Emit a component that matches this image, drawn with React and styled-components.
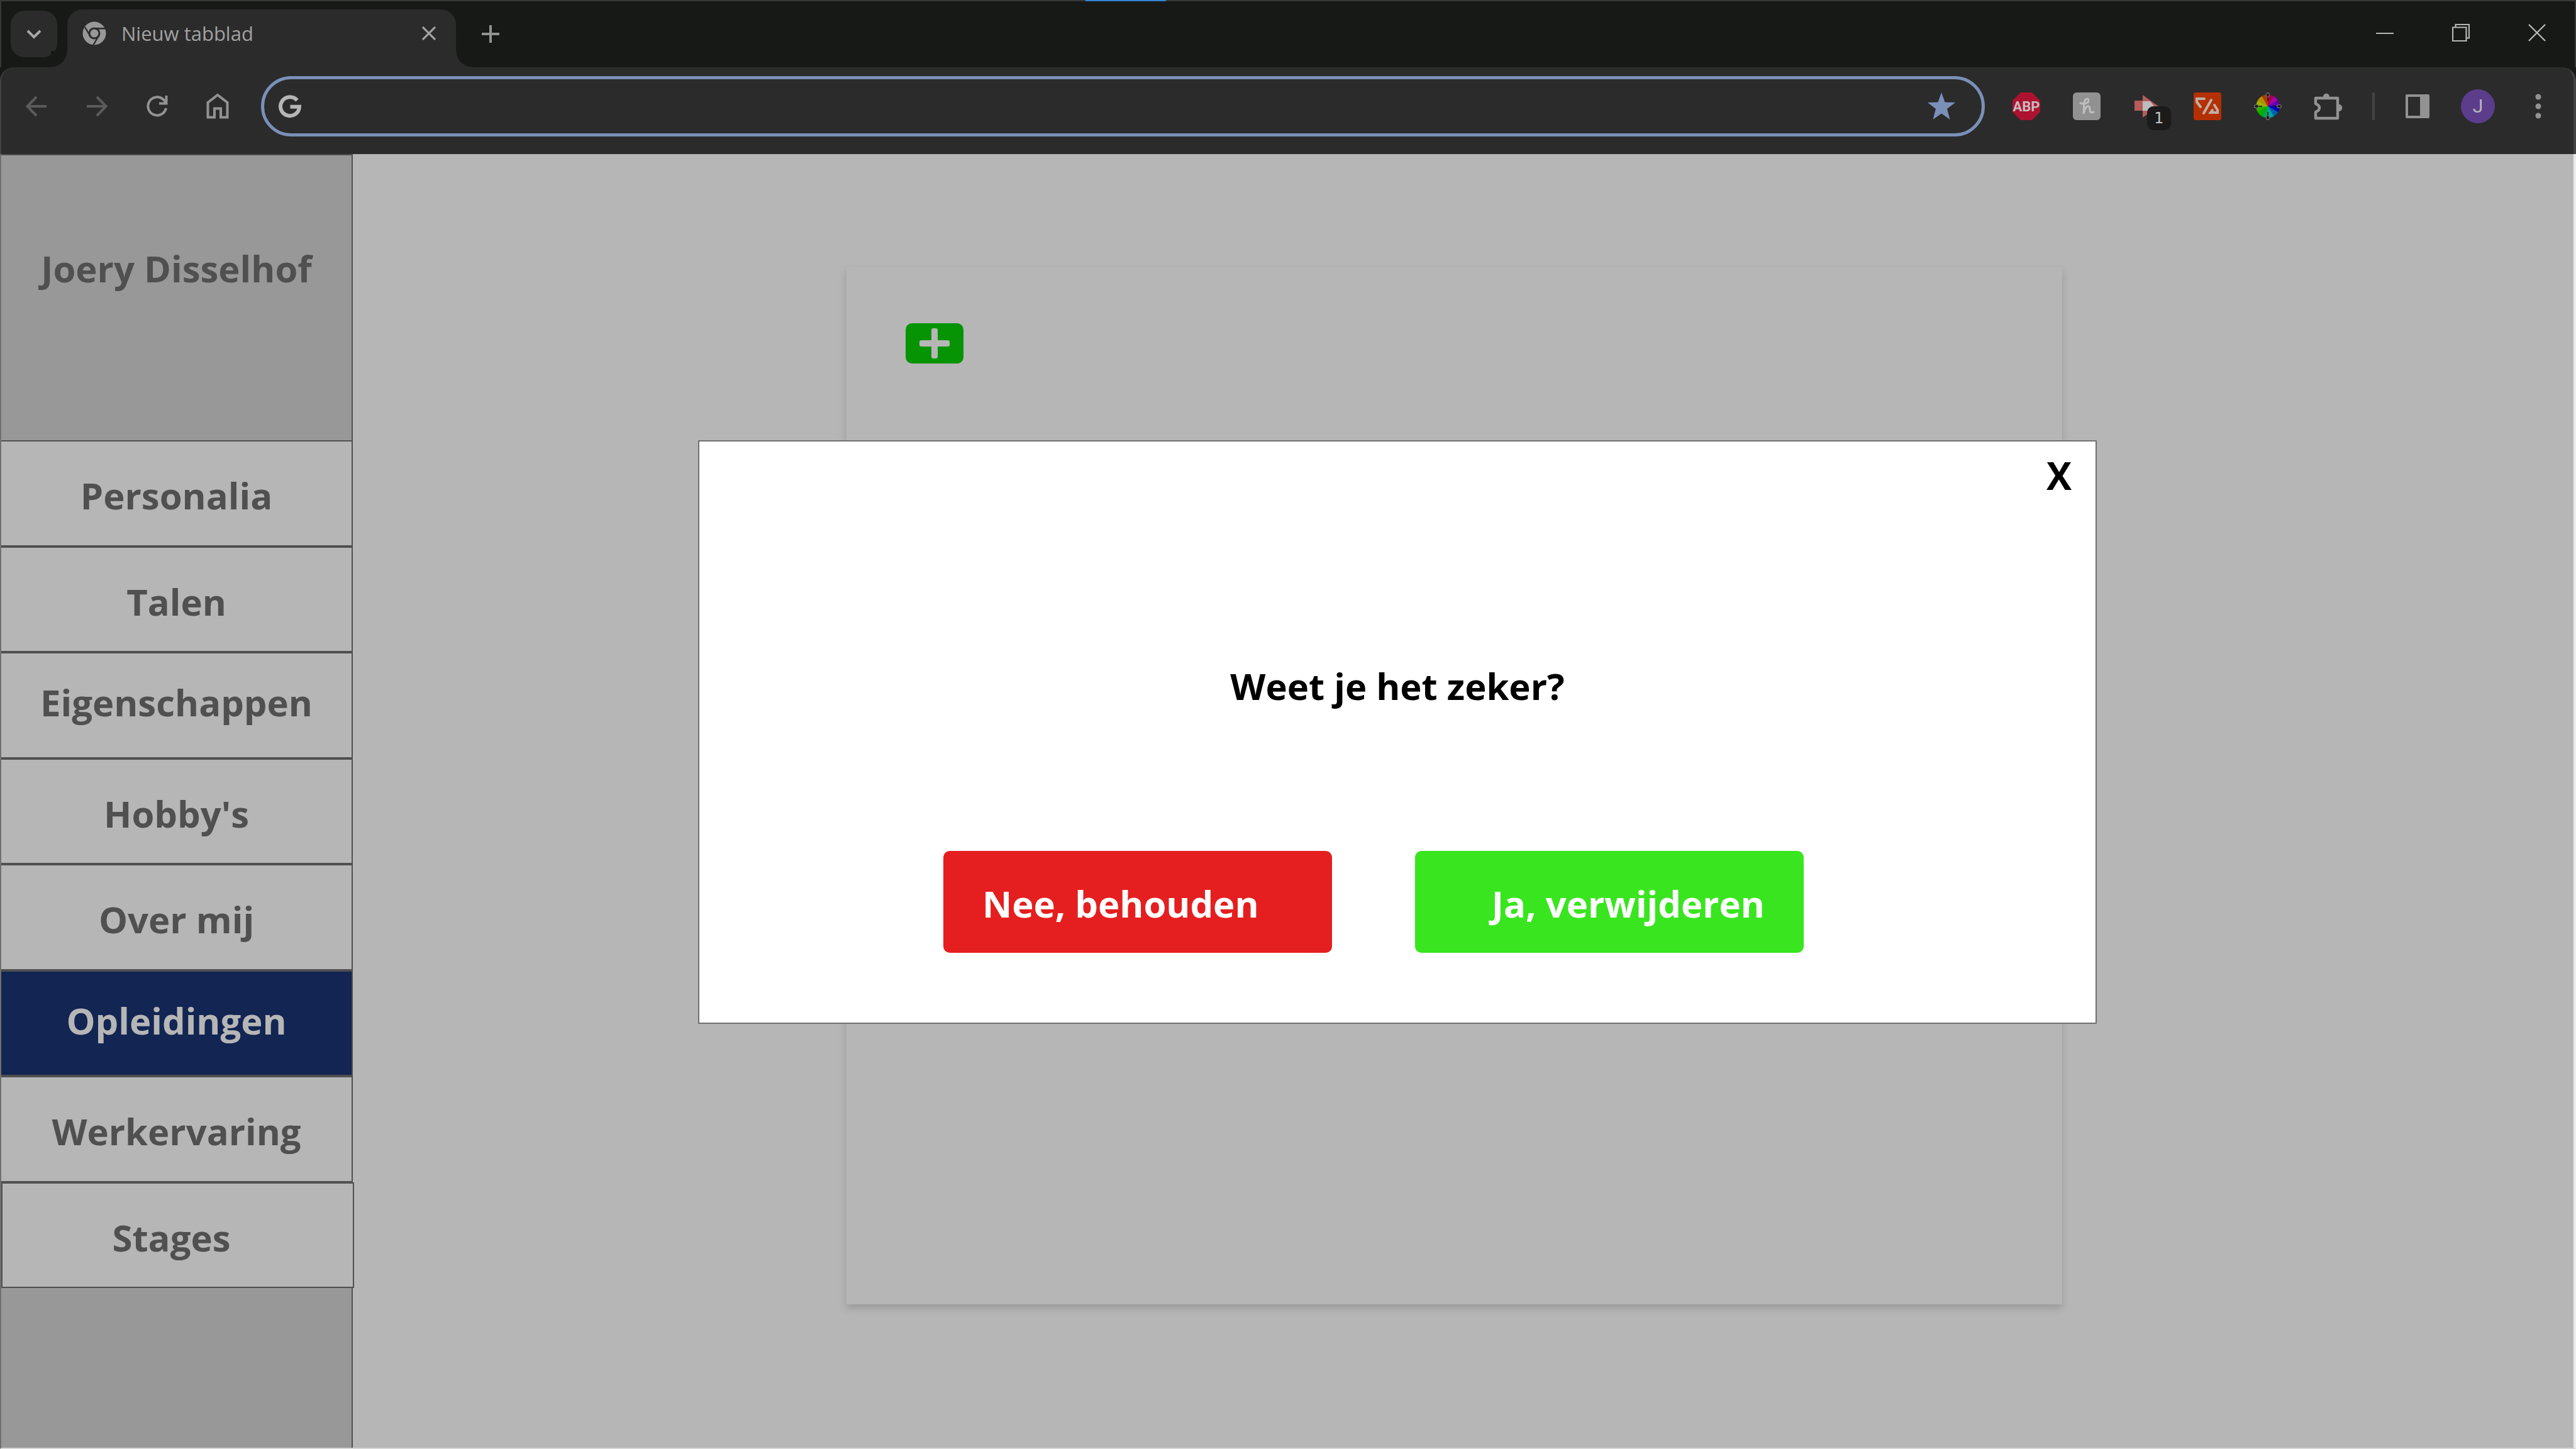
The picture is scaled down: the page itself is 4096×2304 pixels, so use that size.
import React from "react";
import styled, { createGlobalStyle } from "styled-components";

const Global = createGlobalStyle`
  * { box-sizing: border-box; }
  html, body, #root { height: 100%; }
  body {
    margin: 0;
    background: #b6b6b6;
    font-family: "Open Sans", "Noto Sans", sans-serif;
  }
  button, input { font: inherit; }
`;

const Window = styled.div`
  position: relative;
  min-height: 100%;
  display: flex;
  flex-direction: column;
  border-top: 2px solid #363936;
  background: #171917;
`;

const ActiveMarker = styled.span`
  position: absolute;
  top: -2px;
  left: 42.14%;
  width: 128px;
  height: 2px;
  background: #3484d4;
`;

const BareButton = styled.button`
  display: flex;
  align-items: center;
  justify-content: center;
  flex: none;
  padding: 0;
  border: 0;
  background: none;
  color: ${(p) => p.$color || "#929292"};
`;

const TabStrip = styled.header`
  display: flex;
  align-items: flex-end;
  height: 105px;
  padding-left: 15px;
  border: 2px solid #363936;
  border-width: 0 2px;
`;

const TabSearch = styled(BareButton)`
  width: 74px;
  height: 74px;
  margin: 0 16px 16px 0;
  border-radius: 22px;
  background: #2b2b2b;
  color: #a8a8a8;
`;

const Tab = styled.div`
  position: relative;
  display: flex;
  align-items: center;
  gap: 24px;
  width: 618px;
  height: 92px;
  padding: 0 32px 16px 24px;
  border-radius: 24px 24px 0 0;
  background: #2b2b2b;
  color: #a2a2a2;
  font-size: 31px;
  line-height: 44px;

  &::before,
  &::after {
    content: "";
    position: absolute;
    bottom: 0;
    width: 26px;
    height: 26px;
  }
  &::before {
    right: 100%;
    background: radial-gradient(circle at 0 0, #171917 25px, #2b2b2b 26px);
  }
  &::after {
    left: 100%;
    background: radial-gradient(circle at 100% 0, #171917 25px, #2b2b2b 26px);
  }
`;

const TabTitle = styled.span`
  flex: 1;
`;

const NewTab = styled(BareButton)`
  width: 74px;
  height: 74px;
  margin: 0 auto 16px 18px;
`;

const WindowControls = styled.div`
  display: flex;
  align-self: flex-start;
`;

const WindowButton = styled(BareButton)`
  width: 121px;
  height: 100px;
  color: #b6b6b6;
`;

const Toolbar = styled.div`
  display: flex;
  align-items: center;
  height: 138px;
  padding: 0 8px 14px;
  border: 0 solid #424242;
  border-width: 0 4px 0 2px;
  border-radius: 22px 22px 0 0;
  background: #2b2b2b;
`;

const NavButton = styled(BareButton)`
  width: 96px;
  height: 96px;
`;

const AddressBar = styled.label`
  display: flex;
  align-items: center;
  flex: 1;
  height: 96px;
  margin: 0 18px 0 21px;
  padding: 0 42px 0 22px;
  border: 5px solid #7a90b8;
  border-radius: 48px;
`;

const AddressInput = styled.input`
  flex: 1;
  min-width: 0;
  height: 80px;
  border: 0;
  outline: 0;
  background: none;
  color: #b6b6b6;
  font-size: 31px;
`;

const Divider = styled.span`
  width: 4px;
  height: 44px;
  margin: 0 20px 0 22px;
  background: #444;
`;

const ExtensionTile = styled.span`
  position: relative;
  display: flex;
  width: 44px;
  height: 44px;
`;

const Badge = styled.span`
  position: absolute;
  top: 22px;
  left: 22px;
  width: 38px;
  height: 38px;
  border-radius: 10px;
  background: #1b1b1b;
  color: #c4c4c4;
  font: 24px/38px "DejaVu Sans", sans-serif;
  text-align: center;
`;

const Avatar = styled.span`
  width: 54px;
  height: 54px;
  border-radius: 50%;
  background: #5c3d8c;
  color: #b6b6b6;
  font: 30px/54px Roboto, sans-serif;
  text-align: center;
`;

const Page = styled.div`
  display: flex;
  flex: 1;
  border: 2px solid;
  border-width: 0 4px 2px 2px;
  border-color: #d6d6d6 #ebebeb #d6d6d6 #707070;
  background: #b6b6b6;
`;

const Sidebar = styled.aside`
  display: flex;
  flex-direction: column;
  flex: none;
  width: 559px;
  border: 2px solid #505050;
  border-width: 2px 2px 0 0;
  background: #989898;
`;

const Owner = styled.h1`
  height: 453px;
  margin: 0;
  padding-top: 138px;
  color: #505050;
  font-size: 58px;
  line-height: 84px;
  font-weight: 700;
  text-align: center;
`;

const Menu = styled.nav`
  display: grid;
  grid-auto-rows: 1fr;
  height: 1348px;
`;

const MenuLink = styled.a`
  display: flex;
  align-items: center;
  justify-content: center;
  padding: ${(p) => (p.$raised ? "0 0 8px" : "8px 0 0")};
  border: 2px solid #505050;
  border-width: 2px 0;
  background: ${(p) => (p.$active ? "#122553" : "#b6b6b6")};
  color: ${(p) => (p.$active ? "#b6b6b6" : "#505050")};
  font-size: 58px;
  line-height: 84px;
  font-weight: 700;
  text-decoration: none;

  &:last-child {
    margin-right: -4px;
    padding-right: 20px;
    border-width: 2px;
  }
`;

const Content = styled.main`
  flex: 1;
  padding: 180px 813px 228px 785px;
`;

const Card = styled.section`
  height: 100%;
  padding: 89px 94px;
  background: #b6b6b6;
  box-shadow: 0 6px 12px rgba(0, 0, 0, 0.16);
`;

const AddButton = styled(BareButton)`
  width: 92px;
  height: 64px;
  border-radius: 10px;
  background: #079404;
  color: #b6b6b6;
`;

const Overlay = styled.div`
  position: absolute;
  inset: 0;
  padding: 698px 762px 0 1110px;
`;

const Dialog = styled.section`
  display: flex;
  flex-direction: column;
  height: 928px;
  padding: 12px 38px 0;
  border: 2px solid #707070;
  background: #fff;
  color: #000;
  font-size: 58px;
  line-height: 84px;
  font-weight: 700;
`;

const CloseButton = styled(BareButton)`
  align-self: flex-end;
  color: #000;
  font-size: 60px;
  font-weight: 700;
`;

const Question = styled.h2`
  margin: 251px 0 220px;
  font-size: 58px;
  text-align: center;
`;

const Actions = styled.div`
  display: flex;
  gap: 132px;
  padding-left: 350px;
`;

const ActionButton = styled.button`
  width: 618px;
  height: 162px;
  padding: 6px 62px 0;
  border: 0;
  border-radius: 10px;
  background: ${(p) => p.$tone};
  color: #fff;
  font-weight: 700;
  text-align: ${(p) => p.$align};
`;

const Svg = ({ w = 44, h = w, box = "0 0 24 24", children, ...rest }) => (
  <svg width={w} height={h} viewBox={box} fill="none" stroke="currentColor" aria-hidden="true" {...rest}>
    {children}
  </svg>
);

const ChromeLogo = () => (
  <Svg w={38} box="0 0 38 38" stroke="none">
    <circle cx="19" cy="19" r="18.5" fill="#989898" />
    <circle cx="19" cy="19" r="9.5" fill="#2b2b2b" />
    <circle cx="19" cy="19" r="6.5" fill="#989898" />
    <path d="M19 11.2H36M12.2 23L4 9M25.8 23L17.5 37.5" stroke="#2b2b2b" strokeWidth="2.4" />
  </Svg>
);

const Google = () => (
  <Svg w={38} box="0 0 38 38" stroke="#b6b6b6" strokeWidth="6">
    <path d="M30.5 9.5A15 15 0 1 0 34 19.8H19.5" />
  </Svg>
);

const Abp = () => (
  <Svg w={44} box="0 0 44 44" stroke="none">
    <path d="M13 0H31L44 13V31L31 44H13L0 31V13Z" fill="#ad1230" />
    <text x="22" y="30" fill="#c8bcbc" fontFamily="Roboto, sans-serif" fontWeight="700" fontSize="22" textAnchor="middle">ABP</text>
  </Svg>
);

const Honey = () => (
  <Svg w={44} box="0 0 44 44" stroke="none">
    <rect width="44" height="44" rx="6" fill="#919191" />
    <path d="M12 17C17 19 26 17 25 12C24 8 19 10 18 16L17 34C19 25 22 21 25 22C30 24 23 35 33 31" stroke="#bebebe" strokeWidth="3" strokeLinecap="round" />
  </Svg>
);

const Arrow = () => (
  <Svg w={44} box="0 0 44 44" stroke="none">
    <path d="M2 13H15V4L40 22L15 40V29H2Z" fill="#b65c5c" />
    <path d="M15 14H27L33 22L22 29H15Z" fill="#bcbcbc" />
  </Svg>
);

const Orange = () => (
  <Svg w={44} box="0 0 44 44" stroke="#bdb0a8" strokeWidth="4">
    <rect width="44" height="44" rx="3" fill="#b53000" stroke="none" />
    <path d="M17 10H5V15L11 23M28 12L16 33M33 20L38 28V32H27L30 28" strokeLinecap="round" />
  </Svg>
);

const wedges = ["#a80040", "#a800a8", "#6000b0", "#0000b8", "#0060b0", "#00a8a0", "#00a850", "#00b000", "#30b000", "#a0b000", "#b09000", "#b03800"];

const Wheel = () => (
  <Svg w={44} box="-22 -22 44 44" stroke="none">
    {wedges.map((fill, i) => (
      <path key={fill} d="M0 0V-18.500A18.500 18.500 0 0 1 9.250 -16Z" fill={fill} stroke={fill} strokeWidth="0.4" transform={`rotate(${i * 30})`} />
    ))}
    <path d="M0 -19V-9M0 19V9M-19 0H-9M19 0H9" stroke="#151515" strokeWidth="1.600" />
    <g stroke="#6c6c6c" strokeWidth="1.4" fill="#111">
      <ellipse cy="-18" rx="2.400" ry="3.400" /><ellipse cy="18" rx="2.400" ry="3.400" /><ellipse cx="-18" rx="3.400" ry="2.400" /><ellipse cx="18" rx="3.400" ry="2.400" />
    </g>
  </Svg>
);

const Puzzle = () => (
  <Svg w={46} box="0 0 46 46" strokeWidth="4.4" strokeLinejoin="round">
    <path d="M3 10H38V42H3V32C11 29 11 22 3 19Z" />
    <path d="M15 8C15 1 25 1 25 8ZM40 20C47 20 47 31 40 31Z" fill="currentColor" stroke="none" />
  </Svg>
);

const items = [
  { label: "Personalia" },
  { label: "Talen" },
  { label: "Eigenschappen", raised: true },
  { label: "Hobby's" },
  { label: "Over mij" },
  { label: "Opleidingen", raised: true, active: true },
  { label: "Werkervaring" },
  { label: "Stages" },
];

export default function App() {
  return (
    <>
      <Global />
      <Window>
        <ActiveMarker />
        <TabStrip>
          <TabSearch aria-label="Tabbladen zoeken">
            <Svg w={24} box="0 0 24 24" strokeWidth="4"><path d="M2 7L12 17L22 7" /></Svg>
          </TabSearch>
          <Tab>
            <ChromeLogo />
            <TabTitle>Nieuw tabblad</TabTitle>
            <BareButton aria-label="Tabblad sluiten" $color="#a2a2a2">
              <Svg w={22} box="0 0 22 22" strokeWidth="3.2"><path d="M1 1L21 21M21 1L1 21" /></Svg>
            </BareButton>
          </Tab>
          <NewTab aria-label="Nieuw tabblad openen">
            <Svg w={28} box="0 0 28 28" strokeWidth="4"><path d="M14 0V28M0 14H28" /></Svg>
          </NewTab>
          <WindowControls>
            <WindowButton aria-label="Minimaliseren">
              <Svg w={28} box="0 0 28 28" strokeWidth="2"><path d="M0 15H28" /></Svg>
            </WindowButton>
            <WindowButton aria-label="Vorig formaat">
              <Svg w={28} box="0 0 28 28" strokeWidth="2.2"><path d="M1 5.5H22.5V27H1ZM5.5 5V1H27V22.5H23" /></Svg>
            </WindowButton>
            <WindowButton aria-label="Sluiten">
              <Svg w={28} box="0 0 28 28" strokeWidth="2.4"><path d="M1 1L27 27M27 1L1 27" /></Svg>
            </WindowButton>
          </WindowControls>
        </TabStrip>

        <Toolbar>
          <NavButton aria-label="Vorige" $color="#5b5b5b">
            <Svg w={34} box="0 0 34 34" strokeWidth="4"><path d="M33 17H3M17 2L2.5 17L17 32" /></Svg>
          </NavButton>
          <NavButton aria-label="Volgende" $color="#5b5b5b">
            <Svg w={34} box="0 0 34 34" strokeWidth="4"><path d="M1 17H31M17 2L31.5 17L17 32" /></Svg>
          </NavButton>
          <NavButton aria-label="Vernieuwen">
            <Svg w={36} box="0 0 36 36" strokeWidth="4"><path d="M32 21A14.5 14.5 0 1 1 28 7.5L32.5 12M32.5 1V13.5H21" /></Svg>
          </NavButton>
          <NavButton aria-label="Startpagina">
            <Svg w={36} h={42} box="0 0 36 42" strokeWidth="4"><path d="M2.5 15L18 3L33.5 15V38.5H23V24.5H13V38.5H2.5Z" /></Svg>
          </NavButton>
          <AddressBar>
            <Google />
            <AddressInput aria-label="Adresbalk" />
            <BareButton aria-label="Bladwijzer" $color="#7a90b8">
              <Svg w={44} box="0 0 44 44" stroke="none">
                <path fill="currentColor" d="M22 0L27.5 15.5L44 16L31 26L35.5 43L22 33.5L8.5 43L13 26L0 16L16.5 15.5Z" />
              </Svg>
            </BareButton>
          </AddressBar>
          <NavButton aria-label="Adblock Plus"><Abp /></NavButton>
          <NavButton aria-label="Honey"><Honey /></NavButton>
          <NavButton aria-label="Meldingen">
            <ExtensionTile><Arrow /><Badge>1</Badge></ExtensionTile>
          </NavButton>
          <NavButton aria-label="Extensie"><Orange /></NavButton>
          <NavButton aria-label="Kleurkiezer"><Wheel /></NavButton>
          <NavButton aria-label="Extensies"><Puzzle /></NavButton>
          <Divider />
          <NavButton aria-label="Zijvenster">
            <Svg w={40} box="0 0 40 40" strokeWidth="4"><path d="M3 3H37V37H3Z" strokeLinejoin="round" /><path d="M24 3H37V37H24Z" fill="currentColor" stroke="none" /></Svg>
          </NavButton>
          <NavButton aria-label="Profiel"><Avatar>J</Avatar></NavButton>
          <NavButton aria-label="Menu">
            <Svg w={10} h={40} box="0 0 10 40" stroke="none"><circle cx="5" cy="5" r="4.5" fill="#929292" /><circle cx="5" cy="20" r="4.5" fill="#929292" /><circle cx="5" cy="35" r="4.5" fill="#929292" /></Svg>
          </NavButton>
        </Toolbar>

        <Page>
          <Sidebar>
            <Owner>Joery Disselhof</Owner>
            <Menu>
              {items.map((item) => (
                <MenuLink key={item.label} href="#" $active={item.active} $raised={item.raised}>
                  {item.label}
                </MenuLink>
              ))}
            </Menu>
          </Sidebar>
          <Content>
            <Card>
              <AddButton aria-label="Toevoegen">
                <Svg w={48} box="0 0 48 48" stroke="none">
                  <path fill="currentColor" d="M22 0H26Q29 0 29 3V19H45Q48 19 48 22V26Q48 29 45 29H29V45Q29 48 26 48H22Q19 48 19 45V29H3Q0 29 0 26V22Q0 19 3 19H19V3Q19 0 22 0Z" />
                </Svg>
              </AddButton>
            </Card>
          </Content>
        </Page>

        <Overlay>
          <Dialog role="dialog" aria-modal="true" aria-labelledby="question">
            <CloseButton aria-label="Sluiten">X</CloseButton>
            <Question id="question">Weet je het zeker?</Question>
            <Actions>
              <ActionButton $tone="#e51f1f" $align="left">Nee, behouden</ActionButton>
              <ActionButton $tone="#39e51f" $align="right">Ja, verwijderen</ActionButton>
            </Actions>
          </Dialog>
        </Overlay>
      </Window>
    </>
  );
}
